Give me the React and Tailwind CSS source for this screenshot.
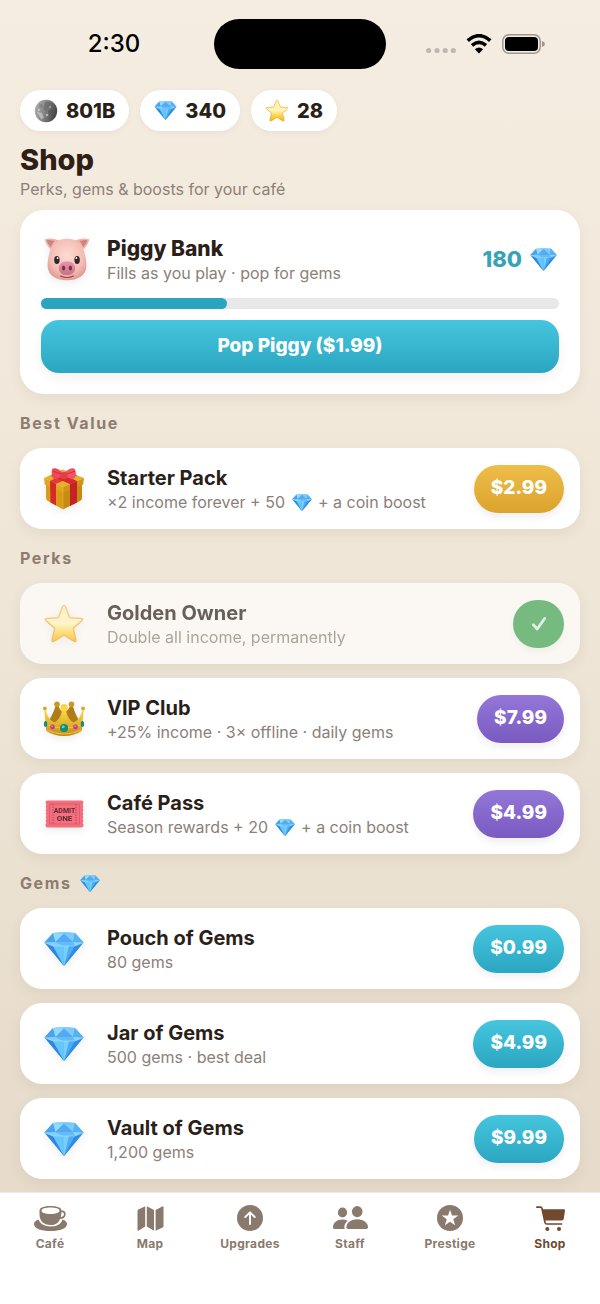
import React from "react";

function Gradients() {
  return (
    <svg className="absolute h-0 w-0" aria-hidden="true">
      <defs>
        <linearGradient id="gemBody" x1="0" y1="0" x2="1" y2="1">
          <stop offset="0" stopColor="#63c3fb" />
          <stop offset="1" stopColor="#2a86dd" />
        </linearGradient>
        <linearGradient id="starFill" x1="0" y1="0" x2="0" y2="1">
          <stop offset="0" stopColor="#fdeeb4" />
          <stop offset="0.5" stopColor="#fff3b8" />
          <stop offset="0.75" stopColor="#fcd34a" />
          <stop offset="1" stopColor="#f5b412" />
        </linearGradient>
        <linearGradient id="starEdge" x1="0" y1="0" x2="0" y2="1">
          <stop offset="0" stopColor="#f3c06c" />
          <stop offset="1" stopColor="#efa41c" />
        </linearGradient>
        <linearGradient id="moonFill" x1="0" y1="0" x2="1" y2="0.3">
          <stop offset="0" stopColor="#b4b4b4" />
          <stop offset="0.5" stopColor="#8a8a8a" />
          <stop offset="1" stopColor="#4a4a4a" />
        </linearGradient>
        <radialGradient id="pigFace" cx="0.5" cy="0.4" r="0.65">
          <stop offset="0" stopColor="#fcdcd3" />
          <stop offset="0.65" stopColor="#f4bdb4" />
          <stop offset="1" stopColor="#dc958f" />
        </radialGradient>
        <linearGradient id="pigSnout" x1="0" y1="0" x2="0" y2="1">
          <stop offset="0" stopColor="#e597a9" />
          <stop offset="1" stopColor="#cb6f88" />
        </linearGradient>
        <linearGradient id="crownFill" x1="0" y1="0" x2="0" y2="1">
          <stop offset="0" stopColor="#f8da4e" />
          <stop offset="0.6" stopColor="#dfb02c" />
          <stop offset="1" stopColor="#bd8617" />
        </linearGradient>
      </defs>
    </svg>
  );
}

function Gem({ className }) {
  return (
    <svg viewBox="0 0 40 34" className={className} aria-hidden="true">
      <path d="M9 1 Q20 -0.6 31 1 L39.5 10.5 L20 34 L0.5 10.5Z" fill="url(#gemBody)" />
      <path d="M9 1 L11.5 10 L0.5 10.5Z" fill="#4ba3ec" />
      <path d="M9 1 L20 1.5 L11.5 10Z" fill="#8fdafe" />
      <path d="M9 1 Q20 -0.6 31 1 L20 1.8Z" fill="#8fd3f8" />
      <path d="M20 1.5 L29 10 L11.5 10Z" fill="#55a9f0" />
      <path d="M20 1.5 L31 1 L29 10Z" fill="#7ecbfb" />
      <path d="M31 1 L39.5 10.5 L29 10Z" fill="#57b2f5" />
      <path d="M0.5 10.5 L9 14 L20 34Z" fill="#2f86dc" />
      <path d="M0.5 10.5 L11.5 10 L20 14 L9 14Z" fill="#7fd0fc" />
      <path d="M9 14 L20 14 L20 34Z" fill="#65c6fd" />
      <path d="M11.5 10 L29 10 L31 14 L20 14Z" fill="#62bbfa" />
      <path d="M20 14 L31 14 L20 34Z" fill="#49acf5" />
      <path d="M20 14 L25 14 L20 34Z" fill="#78cfff" />
      <path d="M29 10 L39.5 10.5 L31 14Z" fill="#8bd8ff" />
      <path d="M39.5 10.5 L31 14 L20 34Z" fill="#2f8ce2" />
      <path d="M1 10.8 L9 14 L31 14 L39 10.8" fill="none" stroke="#a9e0ff" strokeWidth="0.6" />
    </svg>
  );
}

function Star({ className }) {
  return (
    <svg viewBox="0 0 40 39" className={className} aria-hidden="true">
      <path
        d="M20 1.5 Q21 1.5 21.5 3 L25.7 13.6 L37.3 14.5 Q39.6 15 38 16.6 L29.2 24.2 L32 35.8 Q32.2 38 30.2 37.3 L20 31 L9.8 37.3 Q7.8 38 8 35.8 L10.8 24.2 L2 16.6 Q0.4 15 2.7 14.5 L14.3 13.6 L18.5 3 Q19 1.5 20 1.5Z"
        fill="url(#starFill)"
        stroke="url(#starEdge)"
        strokeWidth="1.4"
        strokeLinejoin="round"
      />
    </svg>
  );
}

function Moon({ className }) {
  return (
    <svg viewBox="0 0 24 24" className={className} aria-hidden="true">
      <circle cx="12" cy="12" r="11.2" fill="url(#moonFill)" />
      <path d="M11 3 q4 -1 7 2 l-1 3 -3 1 -2 3 -3 -2 1 -3z" fill="#5f5f5f" opacity="0.5" />
      <path d="M14 12 l4 -2 3 3 -2 4 -4 -1z" fill="#505050" opacity="0.5" />
      <path d="M3 13 l5 1 2 5 -3 1z" fill="#d6d6d6" opacity="0.6" />
      <circle cx="7" cy="7" r="2" fill="#707070" opacity="0.5" />
      <circle cx="13" cy="16" r="1.3" fill="#dcdcdc" opacity="0.6" />
      <circle cx="16" cy="8" r="1" fill="#c8c8c8" opacity="0.7" />
      <circle cx="5" cy="11" r="1" fill="#dcdcdc" opacity="0.8" />
    </svg>
  );
}

function Pig({ className }) {
  return (
    <svg viewBox="0 0 46 43" className={className} aria-hidden="true">
      <path d="M23 0.8 C33 0.800 38.500 6 40.500 15 C42 20 42.600 25 42.300 29 C41.500 37.500 34 42.300 23 42.300 C12 42.300 4.500 37.500 3.700 29 C3.400 25 4 20 5.500 15 C7.500 6 13 0.800 23 0.800Z" fill="url(#pigFace)" />
      <path d="M15 2.500 Q8 -0.300 1.500 0.900 Q0.500 1.200 1 2.500 Q2.500 8 7 11.500 Q9 5.500 15 2.500Z" fill="#efb4aa" />
      <path d="M31 2.500 Q38 -0.300 44.500 0.900 Q45.500 1.200 45 2.500 Q43.500 8 39 11.500 Q37 5.500 31 2.500Z" fill="#efb4aa" />
      <path d="M10.500 3 Q6 1.600 2.500 2 Q4 7 7 9.300 Q8 5.500 10.500 3Z" fill="#cf837b" />
      <path d="M35.500 3 Q40 1.600 43.500 2 Q42 7 39 9.300 Q38 5.500 35.500 3Z" fill="#cf837b" />
      <ellipse cx="12.900" cy="22" rx="2.700" ry="4" fill="#332624" />
      <ellipse cx="33.100" cy="22" rx="2.700" ry="4" fill="#332624" />
      <circle cx="13.600" cy="20" r="0.900" fill="#fff" />
      <circle cx="32.400" cy="20" r="0.900" fill="#fff" />
      <rect x="14.800" y="23.500" width="16.400" height="13.500" rx="6.600" fill="url(#pigSnout)" />
      <ellipse cx="19.600" cy="30" rx="1.600" ry="2.500" fill="#783246" />
      <ellipse cx="26.400" cy="30" rx="1.600" ry="2.500" fill="#783246" />
      <path d="M16.500 38 Q23 41 29.500 38" fill="none" stroke="#934b4b" strokeWidth="1.200" strokeLinecap="round" />
    </svg>
  );
}

function Gift({ className }) {
  return (
    <svg viewBox="0 0 42 42" className={className} aria-hidden="true">
      <path d="M3 13 L20 21 V41.5 L5 33 Q3 32 3 30Z" fill="#d89c17" />
      <path d="M39 13 L20 21 V41.5 L37 33 Q39 32 39 30Z" fill="#c78b10" />
      <path d="M1 10 L20 1.5 L41 10 L20 19Z" fill="#e5ae2c" />
      <path d="M1 10 L20 19 V24.5 L1.8 16.5Z" fill="#dfa620" />
      <path d="M41 10 L20 19 V24.5 L40.2 16.5Z" fill="#d19515" />
      <path d="M20 19 V41" stroke="#e8b63c" strokeWidth="0.7" />
      <path d="M7 12.8 L13 15.7 V37.6 L7.5 34.5Z" fill="#d6292c" />
      <path d="M27 16 L34 13 V34.5 L27 38Z" fill="#c42226" />
      <path d="M7 12.8 L27 4.5 L34 7.3 L13 15.7Z" fill="#df3a3d" />
      <path d="M8 8 L14 4 L34 13 L27 16Z" fill="#d8282e" />
      <path d="M20 5.5 C16 -0.5 10 -0.5 9.2 1 C8 4 9 9.5 11 11 C14 11.5 18 9 20 7Z" fill="#ef4a56" />
      <path d="M21 5.5 C26 -0.5 31 -0.5 32 1.5 C33.5 5 33 9.5 31 10.5 C28 11.5 24 9.5 21 7Z" fill="#f3545f" />
      <path d="M10 3 Q13 5 19 6 M32 3 Q28 5 23 6" stroke="#c9262f" strokeWidth="0.9" fill="none" />
      <rect x="17.5" y="4" width="7" height="7" rx="2.6" fill="#e63e49" />
    </svg>
  );
}

function Crown({ className }) {
  return (
    <svg viewBox="0 0 42 35" className={className} aria-hidden="true">
      <path d="M3 24 Q9 16 13 4 H15 Q17 10 21 12 Q25 10 27.500 4 H29.500 Q33 16 39 24Z" fill="#b07c17" />
      <circle cx="14" cy="3.200" r="2.800" fill="#cb9828" />
      <circle cx="28.500" cy="3.200" r="2.800" fill="#cb9828" />
      <path
        d="M1.200 8 L3.200 30 Q11 35 21 35 Q31 35 38.800 30 L40.800 8 H39.500 Q37.500 18 31 21.500 Q25.500 20 22.600 9 H19.400 Q16.500 20 11 21.500 Q4.500 18 2.500 8Z"
        fill="url(#crownFill)"
      />
      <path d="M3 23.500 Q21 31 39 23.500" fill="none" stroke="#f2d35b" strokeWidth="0.700" />
      <path d="M3.400 29 Q21 37 38.600 29" fill="none" stroke="#f0cd52" strokeWidth="0.900" />
      <circle cx="21" cy="6.800" r="3.700" fill="#f8d644" />
      <circle cx="1.900" cy="7.400" r="1.900" fill="#d8a52b" />
      <circle cx="40.100" cy="7.400" r="1.900" fill="#d8a52b" />
      <circle cx="21" cy="27" r="4" fill="#128d72" />
      <circle cx="20.200" cy="25.700" r="1.500" fill="#5fd3b1" />
      <circle cx="9.500" cy="26" r="2.400" fill="#cf358b" />
      <circle cx="32.500" cy="26" r="2.400" fill="#cf358b" />
      <circle cx="9" cy="25.300" r="0.800" fill="#f09bcb" />
      <circle cx="32" cy="25.300" r="0.800" fill="#f09bcb" />
      <ellipse cx="2.600" cy="23" rx="1.700" ry="3" fill="#168f75" />
      <ellipse cx="39.400" cy="23" rx="1.700" ry="3" fill="#168f75" />
    </svg>
  );
}

function Ticket({ className }) {
  return (
    <svg viewBox="0 0 40 28" className={className} aria-hidden="true">
      <rect x="1" y="0.500" width="38" height="27" rx="2" fill="#f36f7e" />
      <path d="M0.800 4 V25 M39.200 4 V25" stroke="#fff" strokeWidth="1.600" strokeDasharray="1.400 2.200" strokeLinecap="round" />
      <rect x="5" y="4" width="30" height="20" fill="none" stroke="#d8566a" strokeWidth="0.700" />
      <path d="M8.500 4 V24 M31.500 4 V24" stroke="#b53c4e" strokeWidth="0.900" strokeDasharray="1.400 1.200" />
      <g fill="#5c2830" fontFamily="Roboto, sans-serif" fontWeight="700" textAnchor="middle">
        <text x="20" y="13" fontSize="7">ADMIT</text>
        <text x="20" y="21" fontSize="8">ONE</text>
      </g>
    </svg>
  );
}

function CafeIcon() {
  return (
    <svg viewBox="0 0 33 25" className="h-[25px] w-[33px]" fill="currentColor" aria-hidden="true">
      <path d="M4.500 13.500 C1.500 14.500 0 16 0 18 C0 22.500 7 25 16.500 25 S33 22.500 33 18 C33 16 31.500 14.500 28.500 13.500 C27 17.500 24 20.500 17 20.500 S6 17.500 4.500 13.500Z" />
      <path fillRule="evenodd" d="M5.500 4.500 C5.500 1.500 10 0 16.500 0 S27.500 1.500 27.500 4.500 C30.500 4.200 32 6 31.700 8.500 C31.300 11.500 29 13 26 13 C24.500 17 21.500 19 16.500 19 C9.500 19 5.500 15 5.500 8Z M7.500 4.800 C7.500 6.800 11.500 8 16.500 8 S25.500 6.800 25.500 4.800 S21.500 1.600 16.500 1.600 S7.500 2.800 7.500 4.800Z M27.400 6.300 C27.400 8.200 27.200 9.700 26.700 11.200 C28.500 11 29.800 10 30 8.300 C30.100 6.900 29 6.100 27.400 6.300Z" />
    </svg>
  );
}

function MapIcon() {
  return (
    <svg viewBox="0 0 27 25" className="h-[25px] w-[27px]" fill="currentColor" aria-hidden="true">
      <path d="M0.500 5 Q0.500 4 1.300 3.600 L8.200 0.300 V20.500 L1.800 24.500 Q0.500 25 0.500 23.500Z" />
      <path d="M9.800 0.300 L17 4 V24.700 L9.800 20.500Z" />
      <path d="M18.600 4 L25.300 0.400 Q26.500 0 26.500 1.500 V20 Q26.500 21 25.700 21.400 L18.600 24.700Z" />
    </svg>
  );
}

function UpgradesIcon() {
  return (
    <svg viewBox="0 0 26 26" className="h-[26px] w-[26px]" aria-hidden="true">
      <circle cx="13" cy="13" r="13" fill="currentColor" />
      <path d="M13 19 V7.500 M8.300 12 L13 7.300 L17.700 12" fill="none" stroke="#fff" strokeWidth="1.900" strokeLinecap="round" strokeLinejoin="round" />
    </svg>
  );
}

function StaffIcon() {
  return (
    <svg viewBox="0 0 35 24" className="h-[24px] w-[35px]" fill="currentColor" aria-hidden="true">
      <ellipse cx="9.500" cy="6.500" rx="4.600" ry="4.900" />
      <ellipse cx="24.200" cy="5.600" rx="5.300" ry="5.600" />
      <path d="M11.800 23 H1.200 Q0 23 0 21.300 C0 17 4 13.600 9.500 13.600 Q12.500 13.600 14.600 14.700 C12 17 10.600 20.500 11.800 23Z" />
      <path d="M24.200 13.300 C31 13.300 35 17.500 35 21.200 Q35 23 33.200 23 H15.200 Q13.400 23 13.400 21.200 C13.400 17.500 17.400 13.300 24.200 13.300Z" />
    </svg>
  );
}

function PrestigeIcon() {
  return (
    <svg viewBox="0 0 26 26" className="h-[26px] w-[26px]" aria-hidden="true">
      <circle cx="13" cy="13" r="13" fill="currentColor" />
      <path d="M13 4.700 L15 10.500 L21.200 10.600 L16.300 14.300 L18.100 20.200 L13 16.700 L7.900 20.200 L9.700 14.300 L4.800 10.600 L11 10.500Z" fill="#fff" />
    </svg>
  );
}

function ShopIcon() {
  return (
    <svg viewBox="0 0 29 25" className="h-[25px] w-[29px]" aria-hidden="true">
      <path d="M0.900 1.200 H4.500 Q5.700 1.200 6 2.500 L9 16.500 Q9.400 18 10.800 18 H25.500" fill="none" stroke="currentColor" strokeWidth="1.700" strokeLinecap="round" />
      <path d="M6.300 3.200 H27.800 Q29.200 3.200 29 4.600 L27.800 12.500 Q27.500 14.400 25.600 14.400 H8.700Z" fill="currentColor" />
      <circle cx="11.300" cy="23" r="2" fill="currentColor" />
      <circle cx="23" cy="23" r="2" fill="currentColor" />
    </svg>
  );
}

const tones = {
  gold: "bg-linear-to-b from-[#efbd49] to-[#dba32d]",
  purple: "bg-linear-to-b from-[#9377d8] to-[#7a5ac1]",
  teal: "bg-linear-to-b from-[#46c5de] to-[#2aa6c1]",
};

const InlineGem = () => <Gem className="mx-0.5 inline-block h-[17px] w-5 align-[-3px]" />;

function StatusBar() {
  return (
    <div className="grid h-[88px] grid-cols-[1fr_172px_1fr] items-center">
      <div className="pl-3.5 text-center text-2xl font-medium text-black">2:30</div>
      <div className="h-[50px] rounded-full bg-black" />
      <div className="flex items-center justify-center gap-2 pr-4">
        <svg viewBox="0 0 30 20" className="h-5 w-[30px]" fill="#bfb8b0" aria-hidden="true">
          <circle cx="2.700" cy="16.500" r="2.600" />
          <circle cx="11" cy="16.500" r="2.600" />
          <circle cx="19.200" cy="16.500" r="2.600" />
          <circle cx="27.300" cy="16.500" r="2.600" />
        </svg>
        <svg viewBox="0 0 26 20" className="ml-0.5 h-5 w-[26px]" aria-hidden="true">
          <path d="M1.700 6.700 Q13 -3.300 24.300 6.700" fill="none" stroke="#000" strokeWidth="3.600" />
          <path d="M6 11.300 Q13 5.300 20 11.300" fill="none" stroke="#000" strokeWidth="3.600" />
          <path d="M8.900 15.300 Q13 11.700 17.100 15.300 L13 19.600Z" fill="#000" />
        </svg>
        <svg viewBox="0 0 43 20" className="ml-0.5 h-5 w-[43px]" aria-hidden="true">
          <rect x="0.800" y="0.800" width="37.400" height="18.400" rx="6" fill="none" stroke="#9d968d" strokeWidth="1.500" />
          <rect x="3" y="3" width="33" height="14" rx="4" fill="#000" />
          <path d="M40 7 Q43 8 43 10 T40 13Z" fill="#9d968d" />
        </svg>
      </div>
    </div>
  );
}

function Balance({ icon, value }) {
  return (
    <div className="flex h-[41px] items-center gap-2 rounded-full bg-white px-3.5 text-xl font-extrabold shadow-[0_2px_6px_rgba(80,50,20,0.06)]">
      {icon}
      <span>{value}</span>
    </div>
  );
}

function SectionTitle({ children }) {
  return (
    <h2 className="flex items-center gap-2 pt-[18px] pb-3.5 text-base leading-[22px] font-bold tracking-widest text-[#8c7d70]">
      {children}
    </h2>
  );
}

function Offer({ icon, title, detail, price, tone, owned }) {
  return (
    <li
      className={
        "flex h-[81px] items-center rounded-[22px] pr-4 pl-[21px] shadow-[0_5px_14px_rgba(80,50,20,0.07)] " +
        (owned ? "bg-[#fbf8f3] *:opacity-70" : "bg-white")
      }
    >
      <div className="flex w-[46px] shrink-0 justify-center drop-shadow-[0_3px_4px_rgba(0,0,0,0.07)]">{icon}</div>
      <div className="ml-5 min-w-0 flex-1">
        <h3 className="text-xl leading-7 font-bold">{title}</h3>
        <p className="text-base leading-[21px] text-[#8c8077]">{detail}</p>
      </div>
      {owned ? (
        <button aria-label="Owned" className="flex h-12 w-[51px] items-center justify-center rounded-full bg-[#3fa150] shadow-[0_4px_8px_rgba(0,0,0,0.06)]">
          <svg viewBox="0 0 16 16" className="h-4 w-4" fill="none" stroke="#d6edd8" strokeWidth="2.800" strokeLinecap="round" strokeLinejoin="round" aria-hidden="true">
            <path d="M2.300 8.800 L6.200 13 L13.700 2.500" />
          </svg>
        </button>
      ) : (
        <button className={"h-12 rounded-full px-[17px] text-[19px] font-extrabold text-white shadow-[0_4px_8px_rgba(0,0,0,0.07)] " + tones[tone]}>
          {price}
        </button>
      )}
    </li>
  );
}

const tabs = [
  { label: "Café", icon: <CafeIcon /> },
  { label: "Map", icon: <MapIcon /> },
  { label: "Upgrades", icon: <UpgradesIcon /> },
  { label: "Staff", icon: <StaffIcon /> },
  { label: "Prestige", icon: <PrestigeIcon /> },
  { label: "Shop", icon: <ShopIcon />, active: true },
];

export default function App() {
  const gem = <Gem className="h-[34px] w-10" />;
  return (
    <div className="flex min-h-screen flex-col bg-linear-to-b from-[#f6ede2] via-[#eee5d6] to-[#e5d9c8] font-['Inter',sans-serif] text-[#2b1f19]">
      <Gradients />
      <StatusBar />
      <main className="flex-1 px-5 pt-0.5 pb-[13px]">
        <div className="flex gap-[11px]">
          <Balance icon={<Moon className="h-6 w-6" />} value="801B" />
          <Balance icon={<Gem className="h-[19px] w-[23px]" />} value="340" />
          <Balance icon={<Star className="h-[23px] w-6" />} value="28" />
        </div>
        <h1 className="mt-[11px] text-[29px] leading-9 font-extrabold text-[#2f2015]">Shop</h1>
        <p className="text-base leading-[22px] text-[#8c8077]">Perks, gems &amp; boosts for your café</p>

        <section className="mt-2.5 rounded-3xl bg-white p-[21px] shadow-[0_5px_14px_rgba(80,50,20,0.07)]">
          <div className="flex h-14 items-center">
            <div className="flex w-[51px] shrink-0 justify-center drop-shadow-[0_3px_4px_rgba(0,0,0,0.07)]">
              <Pig className="h-[43px] w-[46px]" />
            </div>
            <div className="ml-[15px] flex-1">
              <h2 className="text-[21px] leading-7 font-extrabold">Piggy Bank</h2>
              <p className="text-base leading-[21px] text-[#8c8077]">Fills as you play · pop for gems</p>
            </div>
            <div className="flex items-center gap-2 pr-0.5 text-[22px] font-extrabold text-[#36a3b9]">
              180
              <Gem className="h-[23px] w-[27px]" />
            </div>
          </div>
          <div className="mt-[11px] h-[11px] rounded-full bg-[#e8e8e8]" role="progressbar" aria-label="Piggy Bank" aria-valuenow={36} aria-valuemin={0} aria-valuemax={100}>
            <div className="h-full w-[36%] rounded-full bg-[#2aa5bf]" />
          </div>
          <button className={"mt-[11px] h-[53px] w-full rounded-[18px] text-[19px] font-extrabold text-white shadow-[0_5px_12px_rgba(0,0,0,0.06)] " + tones.teal}>
            Pop Piggy ($1.99)
          </button>
        </section>

        <SectionTitle>Best Value</SectionTitle>
        <ul>
          <Offer
            icon={<Gift className="h-[42px] w-[42px]" />}
            title="Starter Pack"
            detail={<>×2 income forever + 50 <InlineGem /> + a coin boost</>}
            price="$2.99"
            tone="gold"
          />
        </ul>

        <SectionTitle>Perks</SectionTitle>
        <ul className="flex flex-col gap-3.5">
          <Offer icon={<Star className="h-[39px] w-[42px]" />} title="Golden Owner" detail="Double all income, permanently" owned />
          <Offer icon={<Crown className="h-[35px] w-[42px]" />} title="VIP Club" detail="+25% income · 3× offline · daily gems" price="$7.99" tone="purple" />
          <Offer
            icon={<Ticket className="h-7 w-[41px]" />}
            title="Café Pass"
            detail={<>Season rewards + 20 <InlineGem /> + a coin boost</>}
            price="$4.99"
            tone="purple"
          />
        </ul>

        <SectionTitle>
          Gems <Gem className="h-[17px] w-5" />
        </SectionTitle>
        <ul className="flex flex-col gap-3.5">
          <Offer icon={gem} title="Pouch of Gems" detail="80 gems" price="$0.99" tone="teal" />
          <Offer icon={gem} title="Jar of Gems" detail="500 gems · best deal" price="$4.99" tone="teal" />
          <Offer icon={gem} title="Vault of Gems" detail="1,200 gems" price="$9.99" tone="teal" />
        </ul>
      </main>

      <nav className="grid grid-cols-6 border-t border-[#eeeae4] bg-white pt-3 pb-[51px]">
        {tabs.map((tab) => (
          <a
            key={tab.label}
            href={"#" + tab.label.toLowerCase()}
            aria-current={tab.active ? "page" : undefined}
            className={"flex flex-col items-center gap-1 text-xs leading-[18px] font-bold tracking-wide " + (tab.active ? "text-[#70492f]" : "text-[#8a796d]")}
          >
            <span className="flex h-[26px] items-center">{tab.icon}</span>
            {tab.label}
          </a>
        ))}
      </nav>
    </div>
  );
}
